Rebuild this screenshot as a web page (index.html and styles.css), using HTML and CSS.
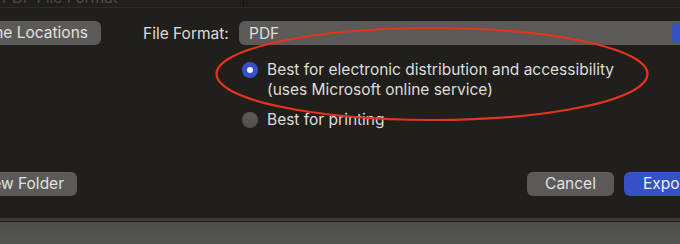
FILE: index.html
```html
<!DOCTYPE html>
<html>
<head>
<meta charset="utf-8">
<link rel="stylesheet" href="styles.css">
</head>
<body>
<div class="sheet">
  <div class="topstrip">
    <span class="faded">PDF File Format</span>
    <span class="vline"></span>
  </div>
  <div class="content">
    <div class="row format-row">
      <button class="btn btn-left-cut">Online Locations</button>
      <span class="label">File Format:</span>
      <div class="popup"><span>PDF</span><span class="popup-arrow"></span></div>
    </div>
    <div class="options">
      <div class="option">
        <span class="radio checked"></span>
        <span class="opt-text">Best for electronic distribution and accessibility<br>(uses Microsoft online service)</span>
      </div>
      <div class="option">
        <span class="radio"></span>
        <span class="opt-text">Best for printing</span>
      </div>
    </div>
    <div class="row bottom-row">
      <button class="btn btn-folder">New Folder</button>
      <div class="spacer"></div>
      <button class="btn btn-cancel">Cancel</button>
      <button class="btn btn-primary">Export</button>
    </div>
  </div>
  <div class="footer"></div>
  <svg class="annot" width="680" height="244" viewBox="0 0 680 244">
    <ellipse cx="432" cy="74" rx="215.5" ry="46" fill="none" stroke="#e3341f" stroke-width="2.2"/>
  </svg>
</div>
</body>
</html>
```
FILE: styles.css
```css
* { box-sizing: border-box; }
html, body { margin: 0; padding: 0; }
body {
  width: 680px;
  height: 244px;
  overflow: hidden;
  background: #201f1b;
  font-family: Inter, "Liberation Sans", sans-serif;
  color: #dedddb;
}
.sheet {
  position: relative;
  width: 680px;
  height: 244px;
  overflow: hidden;
  display: flex;
  flex-direction: column;
}
.topstrip {
  position: relative;
  height: 8px;
  border-bottom: 1px solid #2d2c29;
  overflow: hidden;
  flex: none;
}
.faded {
  position: absolute;
  left: 2px;
  top: -11px;
  font-size: 15.5px;
  line-height: 18px;
  color: #4e4d49;
  white-space: nowrap;
}
.vline {
  position: absolute;
  left: 243px;
  top: 0;
  width: 1px;
  height: 7px;
  background: #121210;
}
.content {
  flex: 1;
  display: flex;
  flex-direction: column;
  padding-top: 13px;
}
.row {
  display: flex;
  align-items: center;
}
.btn {
  font-family: inherit;
  font-size: 15.5px;
  color: #e2e1df;
  background: #5b5a58;
  border: none;
  border-radius: 6px;
  height: 24px;
  padding: 0 13px;
  line-height: 24px;
  white-space: nowrap;
  box-shadow: 0 0.5px 0 rgba(255,255,255,0.08) inset;
}
.btn-left-cut {
  margin-left: -60px;
  width: 161px;
  text-align: right;
}
.label {
  font-size: 15.5px;
  margin-left: 42px;
  width: 96px;
  white-space: nowrap;
}
.popup {
  flex: 1;
  height: 24px;
  margin-right: -40px;
  background: #5b5a58;
  border-radius: 6px;
  display: flex;
  align-items: center;
  padding-left: 10px;
  font-size: 15.5px;
  position: relative;
}
.popup span:first-child { flex: 1; }
.popup-arrow {
  width: 46px;
  height: 20px;
  margin-right: 2px;
  background: #3451c6;
  border-radius: 5px;
}
.options {
  display: flex;
  flex-direction: column;
  margin-left: 242px;
  margin-top: 15px;
  gap: 10px;
}
.option {
  display: flex;
  align-items: flex-start;
  gap: 9px;
}
.opt-text {
  font-size: 15.5px;
  line-height: 20px;
  white-space: nowrap;
}
.radio {
  width: 16px;
  height: 16px;
  border-radius: 50%;
  margin-top: 2px;
  background: linear-gradient(#5e5d5b, #4f4e4c);
  flex: none;
  position: relative;
}
.radio.checked {
  background: #3452c7;
}
.radio.checked::after {
  content: "";
  position: absolute;
  left: 5px;
  top: 5px;
  width: 6px;
  height: 6px;
  border-radius: 50%;
  background: #f2f2f6;
}
.bottom-row {
  margin-top: 42px;
}
.btn-folder {
  margin-left: -40px;
  width: 117px;
  text-align: right;
}
.spacer { flex: 1; }
.btn-cancel {
  width: 87px;
  text-align: center;
  margin-right: 10px;
}
.btn-primary {
  width: 96px;
  margin-right: -40px;
  background: #3451c6;
  color: #f0f0f4;
  text-align: left;
  padding-left: 19px;
}
.footer {
  flex: none;
  height: 26px;
  border-top: 1px solid #3b3a37;
  background: linear-gradient(#3c3b39 0, #3c3b39 2px, #1c1b19 2px, #1c1b19 3px, #4d4d4c 3px, #545453 100%);
}
.annot {
  position: absolute;
  left: 0;
  top: 0;
  pointer-events: none;
}
```
